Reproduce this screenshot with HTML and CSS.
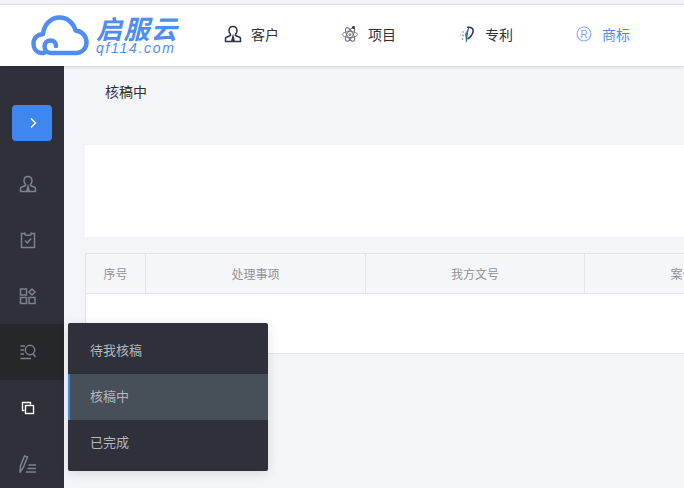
FILE: index.html
```html
<!DOCTYPE html>
<html lang="en">

  <head>
    <meta charset="UTF-8">
    <meta name="viewport" content="width=device-width, initial-scale=1.0">
    <title>核稿中</title>

    <link rel="stylesheet" href="styles.css">

  </head>

  <body>

    <header class="top__bar">
      <div class="logo">
        <svg class="logo__cloud" width="58" height="42" viewBox="0 0 58 42" fill="none" stroke="#4f8df5" stroke-width="4.500" stroke-linecap="round" stroke-linejoin="round">
          <path d="M13 38H11C5.500 38 2.500 33.500 2.500 28.500C2.500 23 6.500 19.500 12 19C13 9.500 20 2.500 28.500 2.500C36.500 2.500 42.500 8 44.500 15.500C51 16 55.500 21 55.500 27.500C55.500 33.500 51 38 45 38H20C16 38 13.500 35 13.500 31.500C13.500 27.500 16.500 25.500 19.500 25.500C23 25.500 25 28 25 31" />
        </svg>
        <div class="logo__text">
          <span class="logo__name">启服云</span>
          <span class="logo__url">qf114.com</span>
        </div>
      </div>
      <nav class="top__nav">
        <a class="nav__item">
          <svg width="18" height="18" viewBox="0 0 18 18" fill="none" stroke="#2c3444" stroke-width="1.500">
            <path d="M9 1.500C6.300 1.500 5 3.200 5 5.500C5 7.300 5.800 8.600 6.500 9.500V10.500L2 12.500C1.500 12.800 1.500 13.500 1.500 14V16.500H16.500V14C16.500 13.500 16.500 12.800 16 12.500L11.500 10.500V9.500C12.200 8.600 13 7.300 13 5.500C13 3.200 11.700 1.500 9 1.500Z" />
            <path d="M9 11.500L7.800 16H10.200Z" fill="#2c3444" />
          </svg>
          <span>客户</span>
        </a>
        <a class="nav__item">
          <svg width="18" height="18" viewBox="0 0 18 18" fill="none" stroke="#6d7280" stroke-width=".9">
            <ellipse cx="9" cy="9.500" rx="7.500" ry="3" />
            <ellipse cx="9" cy="9.500" rx="7.500" ry="3" transform="rotate(60 9 9.500)" />
            <ellipse cx="9" cy="9.500" rx="7.500" ry="3" transform="rotate(120 9 9.500)" />
            <circle cx="9" cy="9.500" r="1.500" fill="#b58a6a" stroke="none" />
            <circle cx="12.500" cy="2.500" r="1.400" fill="#26304a" stroke="none" />
          </svg>
          <span>项目</span>
        </a>
        <a class="nav__item">
          <svg width="18" height="18" viewBox="0 0 18 18" fill="none">
            <path d="M9 2.500C13 1.500 16 3.500 15 7C14.200 10 12 12.500 9.500 14" stroke="#2f3644" stroke-width="1.500" />
            <path d="M11 2.500L9.500 8L8.500 17L7.500 9Z" fill="#2a7fc4" stroke="#1f5f94" stroke-width=".7" />
            <circle cx="5" cy="7" r=".9" fill="#aab0ba" />
            <circle cx="2.500" cy="10" r=".9" fill="#c2c5cb" />
            <circle cx="5" cy="10.500" r=".9" fill="#8d939e" />
            <circle cx="4.500" cy="14" r=".9" fill="#b3986a" />
          </svg>
          <span>专利</span>
        </a>
        <a class="nav__item nav__item--active">
          <svg width="18" height="18" viewBox="0 0 18 18" fill="none">
            <circle cx="9" cy="9" r="7" stroke="#8fa9f5" stroke-width="1.100" />
            <text x="9" y="12.500" class="nav__mark">R</text>
          </svg>
          <span>商标</span>
        </a>
      </nav>
    </header>

    <div class="app__body">

      <aside class="side__bar">
        <button class="side__toggle">
          <svg width="12" height="12" viewBox="0 0 12 12" fill="none" stroke="#ffffff" stroke-width="1.400">
            <path d="M4 1.500L8.500 6L4 10.500" />
          </svg>
        </button>
        <ul class="side__list">
          <li class="side__item">
            <svg width="18" height="18" viewBox="0 0 18 18" fill="none" stroke="#7d828b" stroke-width="1.500">
              <path d="M9 1.500C6.300 1.500 5 3.200 5 5.500C5 7.300 5.800 8.600 6.500 9.500V10.500L2 12.500C1.500 12.800 1.500 13.500 1.500 14V16.500H16.500V14C16.500 13.500 16.500 12.800 16 12.500L11.500 10.500V9.500C12.200 8.600 13 7.300 13 5.500C13 3.200 11.700 1.500 9 1.500Z" />
              <path d="M9 11.500L7.800 16H10.200Z" fill="#7d828b" />
            </svg>
          </li>
          <li class="side__item">
            <svg width="18" height="18" viewBox="0 0 18 18" fill="none" stroke="#7d828b" stroke-width="1.500">
              <path d="M6 2.500H2.500V16.500H15.500V2.500H12" />
              <path d="M6 1.500V3.500C6 4.500 12 4.500 12 3.500V1.500" />
              <path d="M6 9.500L8.300 11.800L12.200 7.500" />
            </svg>
          </li>
          <li class="side__item">
            <svg width="18" height="18" viewBox="0 0 18 18" fill="none" stroke="#7d828b" stroke-width="1.500">
              <rect x="1.500" y="2" width="6" height="6" />
              <rect x="1.500" y="10.500" width="6" height="6" />
              <rect x="10" y="10.500" width="6" height="6" />
              <path d="M13 2L16 5L13 8L10 5Z" />
            </svg>
          </li>
          <li class="side__item side__item--open">
            <svg width="18" height="18" viewBox="0 0 18 18" fill="none" stroke="#7d828b" stroke-width="1.400">
              <path d="M1.500 3H6M1.500 7H5M1.500 11H5M1.500 15.500H12" />
              <circle cx="11" cy="7" r="4.700" />
              <path d="M14 10.500L16.500 14" />
            </svg>
          </li>
          <li class="side__item">
            <svg width="14" height="14" viewBox="0 0 14 14" fill="none" stroke="#ffffff" stroke-width="1.400">
              <path d="M9.500 3.500V1.500H1.500V9.500H3.500" />
              <rect x="4.500" y="4.500" width="8" height="8" />
            </svg>
          </li>
          <li class="side__item">
            <svg width="20" height="20" viewBox="0 0 20 20" fill="none" stroke="#7d828b" stroke-width="1.500">
              <path d="M2 18.500L2.500 12L6.500 2L9.500 3L5.500 13Z" />
              <path d="M10.500 11H18M9.500 14.500H18M8 18H18" />
            </svg>
          </li>
        </ul>
      </aside>

      <main class="main__sec">
        <div class="crumb">核稿中</div>
        <div class="filter__card"></div>
        <div class="table__div">
          <div class="table__head">
            <div class="table__cell table__cell--no">序号</div>
            <div class="table__cell table__cell--task">处理事项</div>
            <div class="table__cell table__cell--ref">我方文号</div>
            <div class="table__cell table__cell--case">案件名称</div>
          </div>
          <div class="table__empty"></div>
        </div>
      </main>

    </div>

    <ul class="pop__menu">
      <li class="pop__item">待我核稿</li>
      <li class="pop__item pop__item--active">核稿中</li>
      <li class="pop__item">已完成</li>
    </ul>

  </body>

</html>
```

FILE: styles.css
```css
* {
  margin: 0;
  padding: 0;
  box-sizing: border-box;
}

html,
body {
  height: 100%;
  overflow: hidden;
}

body {
  position: relative;
  display: flex;
  flex-direction: column;
  background-color: #f3f5f9;
  font-family: "Noto Sans CJK SC", "Liberation Sans", sans-serif;
  font-size: 14px;
}

ul {
  list-style: none;
}

.top__bar {
  position: relative;
  z-index: 1;
  display: flex;
  align-items: center;
  flex: 0 0 62px;
  margin-top: 4px;
  padding-left: 31px;
  background-color: #ffffff;
  border-top: 1px solid #dfe0e3;
  box-shadow: 0 1px 3px rgba(0, 0, 0, 0.16);
}

.logo {
  display: flex;
  align-items: center;
  gap: 7px;
  flex: none;
  width: 193px;
}

.logo__cloud {
  flex: none;
}

.logo__text {
  display: flex;
  flex-direction: column;
  color: #4f8df5;
  font-style: italic;
}

.logo__name {
  font-size: 26px;
  line-height: 26px;
  font-weight: 700;
  letter-spacing: 1.500px;
}

.logo__url {
  font-family: "Liberation Sans", sans-serif;
  font-size: 14px;
  line-height: 15px;
  letter-spacing: 1.700px;
}

.top__nav {
  display: flex;
  padding-bottom: 4px;
}

.nav__item {
  display: flex;
  align-items: center;
  gap: 9px;
  width: 117px;
  color: #303133;
}

.nav__item--active {
  color: #4f8df5;
}

.nav__mark {
  fill: #7f9df0;
  font-family: "Liberation Sans", sans-serif;
  font-size: 10px;
  text-anchor: middle;
}

.app__body {
  display: flex;
  flex: 1;
  min-height: 0;
}

.side__bar {
  flex: 0 0 64px;
  padding-top: 39px;
  background-color: #2e3139;
}

.side__toggle {
  display: flex;
  align-items: center;
  justify-content: center;
  width: 40px;
  height: 36px;
  margin-left: 12px;
  padding-left: 2px;
  border: none;
  border-radius: 4px;
  background-color: #3f87ee;
}

.side__list {
  margin-top: 15px;
}

.side__item {
  display: flex;
  align-items: center;
  justify-content: center;
  height: 56px;
  padding-right: 8px;
}

.side__item--open {
  background-color: #25272b;
}

.main__sec {
  flex: 1;
  min-width: 0;
  padding-left: 21px;
  overflow: hidden;
}

.crumb {
  height: 79px;
  padding: 15px 0 0 20px;
  line-height: 20px;
  color: #303133;
}

.filter__card {
  height: 92px;
  background-color: #ffffff;
}

.table__div {
  width: 700px;
  margin-top: 16px;
  border: 1px solid #e3e5ea;
  border-right: none;
  background-color: #ffffff;
}

.table__head {
  display: flex;
  height: 40px;
  background-color: #f4f6fa;
  border-bottom: 1px solid #e3e5ea;
  color: #909399;
  font-size: 12px;
}

.table__cell {
  display: flex;
  align-items: center;
  justify-content: center;
  flex: none;
  border-right: 1px solid #e3e5ea;
}

.table__cell--no {
  width: 60px;
}

.table__cell--task {
  width: 220px;
}

.table__cell--ref {
  width: 219px;
}

.table__cell--case {
  width: 220px;
}

.table__empty {
  height: 59px;
}

.pop__menu {
  position: absolute;
  left: 68px;
  top: 323px;
  width: 200px;
  padding: 5px 0;
  border-radius: 2px;
  background-color: #2e3139;
  box-shadow: 0 2px 12px rgba(0, 0, 0, 0.12);
  color: #b4b7bd;
  font-size: 13px;
}

.pop__item {
  height: 46px;
  line-height: 44px;
  padding-left: 22px;
}

.pop__item--active {
  border-left: 2px solid #3f87ee;
  padding-left: 20px;
  background-color: #474f58;
}
```
